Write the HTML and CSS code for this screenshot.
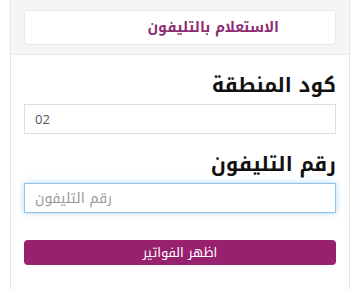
FILE: index.html
```html
<!DOCTYPE html>
<html lang="ar" dir="rtl">
<head>
<meta charset="utf-8">
<link rel="stylesheet" href="styles.css">
</head>
<body>
<div class="card">
  <div class="card-head">
    <div class="tab"><span class="tab-title">الاستعلام بالتليفون</span></div>
  </div>
  <div class="card-body">
    <label class="label">كود المنطقة</label>
    <input class="field" type="text" value="02" dir="ltr">
    <label class="label">رقم التليفون</label>
    <input class="field focus" type="text" placeholder="رقم التليفون" dir="ltr">
    <button class="btn">اظهر الفواتير</button>
  </div>
</div>
</body>
</html>
```
FILE: styles.css
```css
* { box-sizing: border-box; }
html, body { margin: 0; padding: 0; background: #fff; }
body {
  padding: 0 10px;
  font-family: "Noto Kufi Arabic", "Noto Sans Arabic", "DejaVu Sans", sans-serif;
}
.card {
  border: 1px solid #e6e6e6;
  border-top: none;
  border-radius: 0 0 4px 4px;
  height: 300px;
}
.card-head {
  background: #f5f5f5;
  border-bottom: 1px solid #ebebeb;
  padding: 10px 13px;
  height: 55px;
}
.tab {
  background: #fff;
  border: 1px solid #e8e8e8;
  border-radius: 4px;
  height: 35px;
  display: flex;
  align-items: center;
  padding-right: 56px;
}
.tab-title {
  color: #8c2a72;
  font-size: 14px;
  font-weight: bold;
}
.card-body {
  padding: 0 13px;
  display: flex;
  flex-direction: column;
}
.label {
  font-size: 20px;
  font-weight: bold;
  color: #111;
  line-height: 30px;
  margin-top: 15px;
  margin-bottom: 4px;
}
.field {
  height: 30px;
  border: 1px solid #dcdcdc;
  border-radius: 0;
  padding: 0 10px;
  font-size: 13px;
  color: #555;
  font-family: "Open Sans", "DejaVu Sans", sans-serif;
  outline: none;
  text-align: left;
}
.field::placeholder {
  color: #999;
  font-size: 14px;
  font-family: "Noto Kufi Arabic", "Noto Sans Arabic", "DejaVu Sans", sans-serif;
}
.focus {
  height: 30px;
  border-color: #8fc2ea;
  box-shadow: 0 0 6px rgba(102, 175, 233, 0.5);
}
.btn {
  margin-top: 27px;
  height: 25px;
  background: #97206f;
  color: #fff;
  border: none;
  border-radius: 4px;
  font-size: 13px;
  font-family: "Noto Kufi Arabic", "Noto Sans Arabic", "DejaVu Sans", sans-serif;
  padding: 0;
}
```
